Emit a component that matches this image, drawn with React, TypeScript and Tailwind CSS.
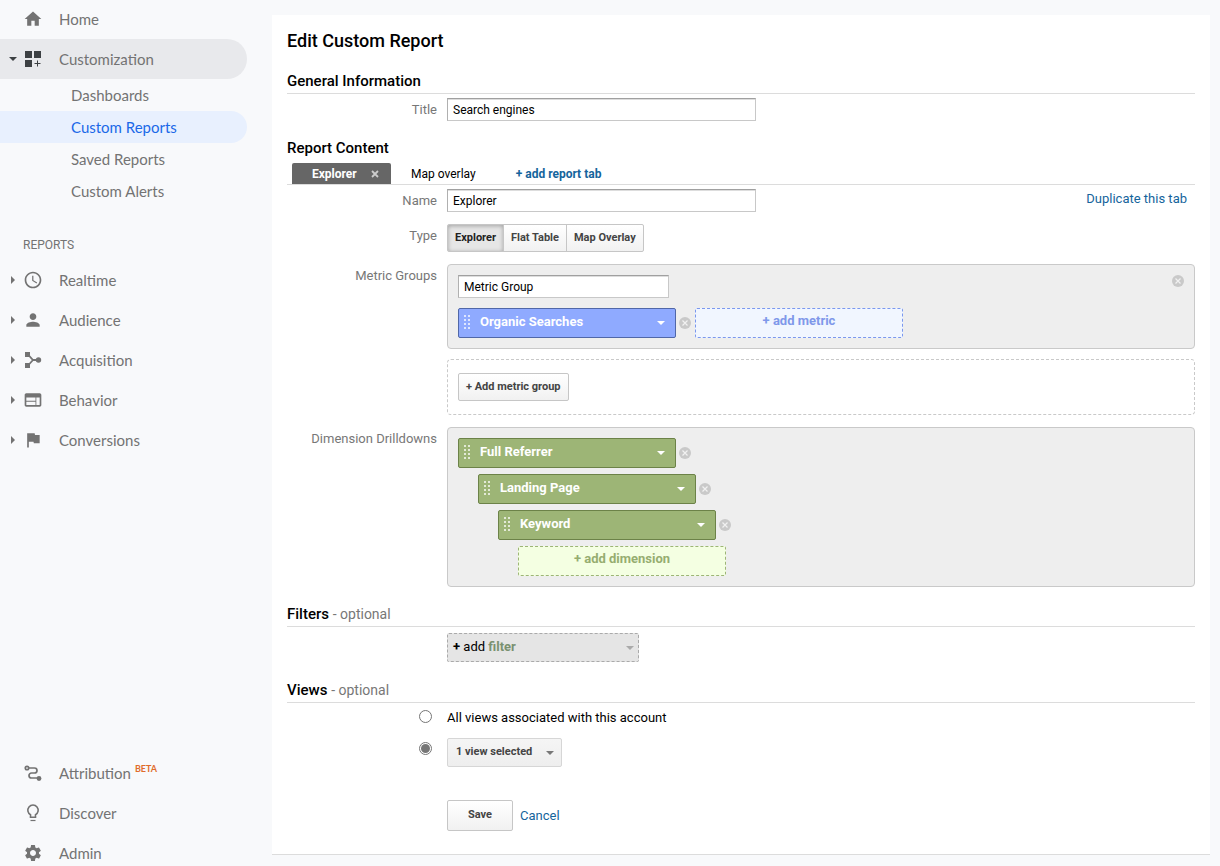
import React, { useState } from 'react';
import { MdAccessTime, MdFlag, MdHome, MdPerson, MdSettings, MdWeb } from 'react-icons/md';

const inputClass =
  'h-[23px] border border-[#c8c8c8] border-t-[#a0a0a0] border-l-[#b0b0b0] bg-white px-[5px] text-xs text-black shadow-[inset_0_1px_0_#ddd] outline-none focus:border-[#4d90fe]';
const buttonClass =
  'rounded-xs border border-[#c6c6c6] bg-gradient-to-b from-white to-[#f1f1f1] text-[11px] font-bold text-[#444]';

function CustomizationIcon() {
  return (
    <svg width="20" height="20" viewBox="0 0 20 20" fill="#3c4043">
      <path d="M2 2h7v7H2zM11 2h7v7h-7zM2 11h7v7H2z" />
      <path d="M14 11.500h1v2.500h2.500v1h-2.500v2.500h-1v-2.500h-2.500v-1h2.500z" />
    </svg>
  );
}

function AcquisitionIcon() {
  return (
    <svg width="20" height="20" viewBox="0 0 20 20" fill="currentColor">
      <path d="M2 2h5v5H2zM2 13h5v5H2z" />
      <circle cx="15.500" cy="10" r="2.700" />
      <path d="M5 4.500 10 10h5M5 15.500 10 10" fill="none" stroke="currentColor" strokeWidth="1.800" />
    </svg>
  );
}

function AttributionIcon() {
  return (
    <svg width="20" height="20" viewBox="0 0 20 20" fill="none" stroke="currentColor" strokeWidth="1.700">
      <circle cx="4" cy="5" r="1.700" />
      <path d="M6 5h5.500a2.500 2.500 0 0 1 0 5H8.500a2.500 2.500 0 0 0 0 5H15" />
      <circle cx="16" cy="15.500" r="2.400" fill="currentColor" stroke="none" />
    </svg>
  );
}

function DiscoverIcon() {
  return (
    <svg width="20" height="20" viewBox="0 0 20 20" fill="none" stroke="currentColor" strokeWidth="1.600">
      <path d="M7.500 14.200v-2.400a5.200 5.200 0 1 1 5 0v2.400z" />
      <path d="M7.500 17.500h5" strokeWidth="1.200" />
    </svg>
  );
}

function Caret({ className }: { className?: string }) {
  return (
    <svg width="8" height="4" viewBox="0 0 8 4" fill="currentColor" className={className}>
      <path d="M0 0h8L4 4z" />
    </svg>
  );
}

function Grip() {
  return (
    <svg width="6" height="14" viewBox="0 0 6 14" fill="#fff" fillOpacity="0.7" className="pointer-events-none absolute top-1.5 left-[5px]">
      {[0, 4, 8, 12].map((y) => (
        <path key={y} d={`M0 ${y}h2v2H0zM4 ${y}h2v2H4z`} />
      ))}
    </svg>
  );
}

function RemoveButton({ label }: { label: string }) {
  return (
    <button type="button" aria-label={label} className="shrink-0">
      <svg width="12" height="12" viewBox="0 0 12 12">
        <circle cx="6" cy="6" r="6" fill="#c9c9c9" />
        <path d="m3.500 3.500 5 5m0-5-5 5" stroke="#f1f1f1" strokeWidth="1.200" />
      </svg>
    </button>
  );
}

function Chip({ name, color }: { name: string; color: 'blue' | 'green' }) {
  return (
    <div className="flex items-center gap-[3px]">
      <div
        className={`relative h-[30px] w-[218px] rounded-xs border text-white ${
          color === 'blue' ? 'border-[#5067a8] bg-[#8faaff]' : 'border-[#6c8248] bg-[#9db576]'
        }`}
      >
        <Grip />
        <select aria-label={name} className="h-full w-full appearance-none bg-transparent pb-0.5 pl-[21px] text-[13px] font-bold outline-none">
          <option>{name}</option>
        </select>
        <Caret className="pointer-events-none absolute top-3 right-[10px]" />
      </div>
      <RemoveButton label={`Remove ${name}`} />
    </div>
  );
}

function NavItem({ icon, label, arrow, active, beta }: {
  icon: React.ReactNode;
  label: string;
  arrow?: boolean;
  active?: boolean;
  beta?: boolean;
}) {
  return (
    <a href="#" className={`flex h-10 w-[247px] items-center rounded-r-full ${active ? 'bg-[#e8e9ec]' : ''}`}>
      <span className="flex w-[23px] justify-center pl-[3px]">
        {active && <Caret className="text-[#3c4043]" />}
        {arrow && (
          <svg width="4" height="8" viewBox="0 0 4 8" fill="currentColor">
            <path d="M0 0v8l4-4z" />
          </svg>
        )}
      </span>
      <span className="w-9">{icon}</span>
      <span>{label}</span>
      {beta && <sup className="ml-1 text-[9px] font-bold text-[#e06c2b]">BETA</sup>}
    </a>
  );
}

function Row({ label, htmlFor, children }: { label: string; htmlFor?: string; children: React.ReactNode }) {
  return (
    <div className="flex gap-[10px]">
      <label htmlFor={htmlFor} className="w-[150px] shrink-0 pt-1 text-right text-[13px] leading-4 text-[#777]">
        {label}
      </label>
      <div className="min-w-0 flex-1">{children}</div>
    </div>
  );
}

const subItems = ['Dashboards', 'Custom Reports', 'Saved Reports', 'Custom Alerts'];
const types = ['Explorer', 'Flat Table', 'Map Overlay'];
const radioClass =
  "grid size-[13px] appearance-none place-items-center rounded-full border border-[#767676] bg-white checked:before:size-[9px] checked:before:rounded-full checked:before:bg-[#767676] checked:before:content-['']";

export default function App() {
  const [type, setType] = useState('Explorer');
  const [scope, setScope] = useState('selected');

  return (
    <div className="flex min-h-screen bg-[#f8f9fb] font-[Roboto,sans-serif] text-[13px]">
      {/* Sidebar */}
      <aside className="sticky top-0 flex h-screen w-[272px] shrink-0 flex-col overflow-hidden font-[Lato,sans-serif] text-[15px] text-[#737373]">
        <nav className="-mt-px">
          <NavItem icon={<MdHome size={20} />} label="Home" />
          <NavItem icon={<CustomizationIcon />} label="Customization" active />
          {subItems.map((item) => (
            <a
              key={item}
              href="#"
              className={`flex h-8 w-[247px] items-center rounded-r-full pl-[71px] ${
                item === 'Custom Reports' ? 'bg-[#e8f0fe] text-[#1a68e8]' : ''
              }`}
            >
              {item}
            </a>
          ))}
          <h2 className="pt-[30px] pb-[7px] pl-[23px] font-[Roboto,sans-serif] text-xs leading-4">REPORTS</h2>
          <NavItem icon={<MdAccessTime size={20} />} label="Realtime" arrow />
          <NavItem icon={<MdPerson size={20} />} label="Audience" arrow />
          <NavItem icon={<AcquisitionIcon />} label="Acquisition" arrow />
          <NavItem icon={<MdWeb size={20} />} label="Behavior" arrow />
          <NavItem icon={<MdFlag size={20} />} label="Conversions" arrow />
        </nav>
        <nav className="mt-auto -mb-[7px]">
          <NavItem icon={<AttributionIcon />} label="Attribution" beta />
          <NavItem icon={<DiscoverIcon />} label="Discover" />
          <NavItem icon={<MdSettings size={20} />} label="Admin" />
        </nav>
      </aside>

      {/* Report form */}
      <main className="mt-[15px] mr-[10px] mb-[11px] min-w-0 flex-1 border-b border-[#dcdcdc] bg-white px-[15px] pt-[14px] pb-[22px]">
        <h1 className="text-lg leading-6 font-medium text-black">Edit Custom Report</h1>

        <h2 className="mt-[18px] border-b border-[#dcdcdc] pb-0.5 text-[15px] leading-5 font-medium text-black">General Information</h2>
        <div className="pt-1">
          <Row label="Title" htmlFor="title">
            <input id="title" className={`block w-[309px] ${inputClass}`} defaultValue="Search engines" />
          </Row>
        </div>

        <h2 className="mt-[17px] text-[15px] leading-5 font-medium text-black">Report Content</h2>
        <div className="mt-[5px] flex h-[22px] items-stretch border-b border-[#dcdcdc] pl-[5px]">
          <div className="flex w-[99px] items-center justify-between rounded-t-xs bg-[#666] pr-3 pl-5 text-white">
            <button type="button" className="text-xs font-bold">Explorer</button>
            <button type="button" aria-label="Close Explorer" className="text-[#ccc]">
              <svg width="8" height="8" viewBox="0 0 8 8" stroke="currentColor" strokeWidth="1.800">
                <path d="m1 1 6 6m0-6L1 7" />
              </svg>
            </button>
          </div>
          <button type="button" className="ml-5 text-xs text-black">Map overlay</button>
          <button type="button" className="ml-10 text-xs font-bold text-[#15649c]">+ add report tab</button>
        </div>

        <div className="flex justify-between pt-1">
          <Row label="Name" htmlFor="name">
            <input id="name" className={`block w-[309px] ${inputClass}`} defaultValue="Explorer" />
          </Row>
          <a href="#" className="pt-0.5 pr-2 leading-4 text-[#15649c]">Duplicate this tab</a>
        </div>

        <div className="mt-3">
          <Row label="Type">
            <div className="flex">
              {types.map((t) => (
                <button
                  key={t}
                  type="button"
                  onClick={() => setType(t)}
                  className={`-ml-px h-7 border border-[#c6c6c6] px-[7px] text-[11px] font-bold first:ml-0 first:rounded-l-xs last:rounded-r-xs ${
                    type === t
                      ? 'bg-[#e6e6e6] text-[#222] shadow-[inset_0_1px_4px_rgba(0,0,0,0.3)]'
                      : 'bg-gradient-to-b from-white to-[#f1f1f1] text-[#444]'
                  }`}
                >
                  {t}
                </button>
              ))}
            </div>
          </Row>
        </div>

        <div className="mt-3">
          <Row label="Metric Groups" htmlFor="group">
            <div className="rounded-sm border border-[#c9c9c9] bg-[#eee] p-[10px]">
              <div className="flex items-start justify-between">
                <input id="group" className={`block w-[211px] ${inputClass}`} defaultValue="Metric Group" />
                <RemoveButton label="Remove metric group" />
              </div>
              <div className="mt-[10px] flex items-center gap-1">
                <Chip name="Organic Searches" color="blue" />
                <button type="button" className="h-[30px] w-[208px] rounded-xs border border-dashed border-[#7b98ee] bg-[#f1f6ff] pb-1 font-bold text-[#7f98ea]">
                  + add metric
                </button>
              </div>
            </div>
            <div className="mt-[10px] rounded-sm border border-dashed border-[#c9c9c9] px-[10px] py-[13px]">
              <button type="button" className={`block h-7 px-[7px] ${buttonClass}`}>+ Add metric group</button>
            </div>
          </Row>
        </div>

        <div className="mt-3">
          <Row label="Dimension Drilldowns">
            <div className="flex flex-col gap-1.5 rounded-sm border border-[#c9c9c9] bg-[#eee] p-[10px]">
              <Chip name="Full Referrer" color="green" />
              <div className="pl-5">
                <Chip name="Landing Page" color="green" />
              </div>
              <div className="pl-10">
                <Chip name="Keyword" color="green" />
              </div>
              <button type="button" className="ml-[60px] h-[30px] w-[208px] rounded-xs border border-dashed border-[#9db576] bg-[#f4ffe2] pb-1 font-bold text-[#96ad70]">
                + add dimension
              </button>
            </div>
          </Row>
        </div>

        <h2 className="mt-[17px] border-b border-[#dcdcdc] pb-0.5 text-[15px] leading-5 font-medium text-black">
          Filters <span className="text-sm font-normal text-[#777]">- optional</span>
        </h2>
        <button
          type="button"
          aria-haspopup="menu"
          className="mt-1.5 ml-40 flex h-[29px] w-48 items-center justify-between rounded-xs border border-dashed border-[#aaa] bg-[#e5e5e5] pr-1 pl-[5px] text-black"
        >
          <span className="pb-0.5">
            <b>+</b> add <b className="text-[#7a9170]">filter</b>
          </span>
          <Caret className="text-[#aaa]" />
        </button>

        <h2 className="mt-[18px] border-b border-[#dcdcdc] pb-0.5 text-[15px] leading-5 font-medium text-black">
          Views <span className="text-sm font-normal text-[#777]">- optional</span>
        </h2>
        <div className="mt-[7px] ml-[132px] flex items-start gap-[15px] leading-4">
          <input type="radio" id="all" name="scope" className={radioClass} checked={scope === 'all'} onChange={() => setScope('all')} />
          <label htmlFor="all" className="text-black">All views associated with this account</label>
        </div>
        <div className="mt-3 ml-[132px] flex items-start gap-[15px]">
          <div className="pt-1">
            <input
              type="radio"
              name="scope"
              aria-label="Selected views"
              className={radioClass}
              checked={scope === 'selected'}
              onChange={() => setScope('selected')}
            />
          </div>
          <div className="relative">
            <select
              aria-label="Views"
              className="block h-[29px] w-[115px] appearance-none rounded-xs border border-[#d6d6d6] bg-gradient-to-b from-[#f5f5f5] to-[#eee] pl-2 text-[11px] font-bold text-[#444]"
            >
              <option>1 view selected</option>
            </select>
            <Caret className="pointer-events-none absolute top-[13px] right-2 text-[#777]" />
          </div>
        </div>

        <div className="mt-[33px] ml-40 flex items-center gap-[7px]">
          <button type="button" className={`h-[31px] w-[66px] ${buttonClass}`}>Save</button>
          <a href="#" className="text-[#15649c]">Cancel</a>
        </div>
      </main>
    </div>
  );
}
